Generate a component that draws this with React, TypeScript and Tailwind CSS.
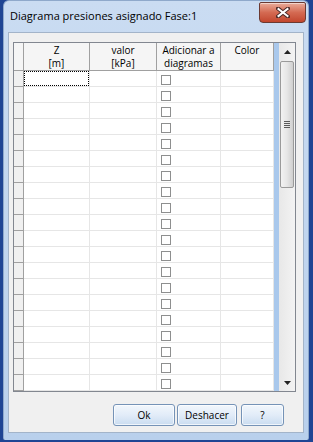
import React from 'react';

const ROWS = 20;

const UpArrow = () => (
  <svg width="7" height="4" viewBox="0 0 7 4">
    <path d="M3.5 0 L7 4 L0 4 Z" fill="#222" />
  </svg>
);

const DownArrow = () => (
  <svg width="7" height="4" viewBox="0 0 7 4">
    <path d="M0 0 L7 0 L3.5 4 Z" fill="#222" />
  </svg>
);

const CloseGlyph = () => (
  <svg width="14" height="11" viewBox="0 0 14 11">
    <path d="M2 1.5 L12 9.5 M12 1.5 L2 9.5" stroke="#4a2a28" strokeWidth="4" strokeLinecap="square" />
    <path d="M2.5 2 L11.5 9 M11.5 2 L2.5 9" stroke="#ffffff" strokeWidth="2" strokeLinecap="square" />
  </svg>
);

const Button = ({ label, width }: { label: string; width: string }) => (
  <button
    className={`${width} h-[22px] rounded-[3px] border border-[#7593b7] bg-gradient-to-b from-[#f2f7fc] via-[#e2ecf8] to-[#c9dcf0] shadow-[inset_0_0_0_1px_rgba(255,255,255,0.7)] text-[10px] text-black flex items-center justify-center`}
  >
    {label}
  </button>
);

export default function App() {
  return (
    <div
      className="w-[313px] h-[442px] bg-[#1f4594] pl-[3px] pr-[4px] pb-[2px] flex flex-col"
      style={{ fontFamily: '"Open Sans", "Noto Sans", sans-serif' }}
    >
      <div className="flex-1 flex flex-col rounded-t-[6px] rounded-b-[2px] bg-gradient-to-b from-[#cadcf2] to-[#b9d0ec] border-x border-t border-[#8fa9cb]">
        {/* Title bar */}
        <div className="h-[31px] flex items-start">
          <div className="pl-[6px] pt-[8px] text-[11px] text-black leading-[14px]">
            Diagrama presiones asignado Fase:1
          </div>
          <div className="ml-auto mt-[1px] mr-[2px] w-[47px] h-[21px] rounded-b-[4px] rounded-t-[2px] border border-[#6b3a32] bg-gradient-to-b from-[#e8ab9a] via-[#d46a52] to-[#c2462e] shadow-[inset_0_1px_0_rgba(255,255,255,0.5)] flex items-center justify-center">
            <CloseGlyph />
          </div>
        </div>

        {/* Client area */}
        <div className="mx-[4px] mb-[7px] flex-1 border border-[#a3b4c9] bg-[#f0f0f0] pl-[4px] pt-[9px] flex flex-col">
          <div className="w-[283px] h-[350px] border border-[#828790] bg-white flex overflow-hidden">
            {/* Table */}
            <div className="w-[260px] flex flex-col">
              <div className="h-[29px] flex border-b border-[#a0a0a0] bg-[#f5f5f5] text-[10px] leading-[13px] text-black">
                <div className="w-[10px] border-r border-[#a0a0a0]" />
                <div className="w-[66px] border-r border-[#a0a0a0] flex flex-col items-center pt-[1px]">
                  <span>Z</span>
                  <span>[m]</span>
                </div>
                <div className="w-[67px] border-r border-[#a0a0a0] flex flex-col items-center pt-[1px]">
                  <span>valor</span>
                  <span>[kPa]</span>
                </div>
                <div className="w-[64px] border-r border-[#a0a0a0] flex flex-col items-center pt-[1px]">
                  <span>Adicionar a</span>
                  <span>diagramas</span>
                </div>
                <div className="w-[53px] border-r border-[#a0a0a0] flex flex-col items-center pt-[1px]">
                  <span>Color</span>
                </div>
              </div>
              {Array.from({ length: ROWS }).map((_, i) => (
                <div key={i} className="h-[16px] shrink-0 flex">
                  <div className="w-[10px] bg-[#f0f0f0] border-r border-b border-[#a0a0a0]" />
                  <div className="w-[66px] border-r border-b border-[#e6e6e6]">
                    {i === 0 && <div className="w-full h-full border border-dotted border-black" />}
                  </div>
                  <div className="w-[67px] border-r border-b border-[#e6e6e6]" />
                  <div className="w-[64px] border-r border-b border-[#e6e6e6] pl-[4px] pt-[4px]">
                    <div className="w-[10px] h-[10px] border border-[#8e8f8f] bg-white" />
                  </div>
                  <div className="w-[53px] border-r border-b border-[#e6e6e6]" />
                </div>
              ))}
            </div>

            {/* light strip */}
            <div className="w-[5px] bg-[#a9c8ec]" />

            {/* Scrollbar */}
            <div className="w-[16px] bg-gradient-to-r from-[#e8e8e8] to-[#f3f3f3] flex flex-col">
              <div className="h-[16px] shrink-0 flex items-center justify-center pt-[1px]">
                <UpArrow />
              </div>
              <div className="mt-[2px] mx-[1px] h-[127px] shrink-0 rounded-[2px] border border-[#9a9a9a] bg-gradient-to-r from-[#f2f2f2] via-[#e6e6e6] to-[#cfcfcf] flex flex-col items-center justify-center gap-[1px]">
                <div className="w-[6px] h-[1px] bg-[#5a5a5a]" />
                <div className="w-[6px] h-[1px] bg-[#5a5a5a]" />
                <div className="w-[6px] h-[1px] bg-[#5a5a5a]" />
                <div className="w-[6px] h-[1px] bg-[#5a5a5a]" />
              </div>
              <div className="flex-1" />
              <div className="h-[16px] shrink-0 flex items-center justify-center">
                <DownArrow />
              </div>
            </div>
          </div>

          {/* Buttons */}
          <div className="mt-[12px] pr-[19px] flex justify-end">
            <Button label="Ok" width="w-[62px]" />
            <div className="w-[2px]" />
            <Button label="Deshacer" width="w-[60px]" />
            <div className="w-[4px]" />
            <Button label="?" width="w-[43px]" />
          </div>
        </div>
      </div>
    </div>
  );
}
